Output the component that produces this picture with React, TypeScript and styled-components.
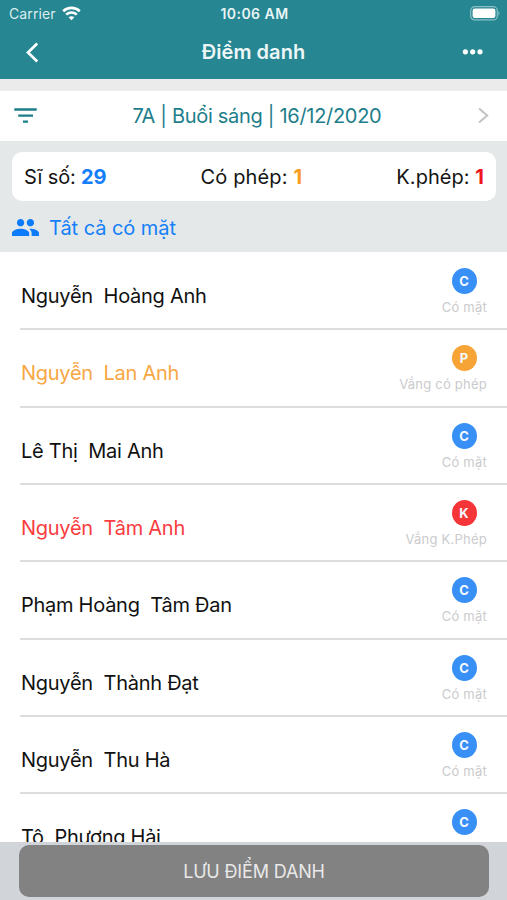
import React from 'react';
import styled, { createGlobalStyle } from 'styled-components';

const GlobalStyle = createGlobalStyle`
  * { box-sizing: border-box; }
  body { margin: 0; background: #fff; font-family: Inter, 'Liberation Sans', sans-serif; }
`;

const Screen = styled.div`
  width: 507px;
  height: 900px;
  overflow: hidden;
  display: flex;
  flex-direction: column;
  background: #fff;
  color: #141414;
`;

const Header = styled.header`
  height: 79px;
  flex: none;
  background: #268692;
  color: #fff;
`;

const StatusBar = styled.div`
  height: 27px;
  display: grid;
  grid-template-columns: 1fr auto 1fr;
  align-items: center;
  padding: 0 7px 0 9px;
`;

const Carrier = styled.div`
  display: flex;
  align-items: center;
  gap: 6px;
  font-size: 14px;
  line-height: 18px;
  letter-spacing: 0.1px;
  color: #dcedef;
`;

const Clock = styled.div`
  font-size: 14px;
  font-weight: 600;
  line-height: 18px;
  letter-spacing: 0.45px;
  color: #e9f4f5;
`;

const Battery = styled.svg`
  justify-self: end;
  display: block;
`;

const NavBar = styled.div`
  height: 50px;
  display: grid;
  grid-template-columns: 60px 1fr 60px;
  align-items: center;
  padding: 0 22px;
`;

const Title = styled.h1`
  margin: 0;
  text-align: center;
  font-size: 20px;
  line-height: 24px;
  font-weight: 600;
  letter-spacing: 0.05px;
  color: #eef7f8;
`;

const MoreIcon = styled.svg`
  display: block;
  justify-self: end;
`;

const FilterBar = styled.div`
  height: 62px;
  flex: none;
  border-top: 12px solid #ebebec;
  padding: 0 17px 0 14px;
  display: flex;
  align-items: center;
  justify-content: space-between;
  color: #1d7e8a;
`;

const FilterLabel = styled.div`
  font-size: 20px;
  line-height: 24px;
  letter-spacing: -0.3px;
  white-space: nowrap;
`;

const Summary = styled.section`
  height: 111px;
  flex: none;
  background: #e4e8e8;
  padding: 11px 11px 0 12px;
`;

const Counts = styled.div`
  height: 49px;
  border-radius: 10px;
  background: #fff;
  padding: 1px 12px 0;
  display: flex;
  align-items: center;
  justify-content: space-between;
  font-size: 20px;
  line-height: 24px;
  letter-spacing: -0.15px;
`;

const CountLabel = styled.span<{ $spacing?: number }>`
  letter-spacing: ${(p) => p.$spacing ?? -0.15}px;
`;

const Count = styled.b<{ $color: string }>`
  color: ${(p) => p.$color};
  font-weight: 700;
`;

const AllPresent = styled.div`
  height: 53px;
  display: flex;
  align-items: center;
  gap: 10px;
  color: #1580f8;
  font-size: 20px;
  line-height: 24px;
  letter-spacing: -0.05px;
`;

const List = styled.main`
  flex: 1;
  min-height: 0;
  overflow: hidden;
  padding-top: 1px;
`;

const Row = styled.div`
  height: 77.35px;
  margin-left: 20px;
  padding-right: 20px;
  border-bottom: 2px solid #dcdddd;
  display: flex;
  justify-content: space-between;
`;

const Name = styled.div<{ $color: string }>`
  padding: 31px 0 0 1px;
  font-size: 20px;
  line-height: 24px;
  letter-spacing: -0.27px;
  white-space: pre;
  color: ${(p) => p.$color};
`;

const State = styled.div`
  padding-top: 15px;
  display: flex;
  flex-direction: column;
  align-items: flex-end;
`;

const Badge = styled.div<{ $color: string }>`
  width: 25px;
  height: 26px;
  border-radius: 50%;
  margin-right: 10.5px;
  background: ${(p) => p.$color};
  color: #f4f8ff;
  font-size: 13px;
  font-weight: 700;
  line-height: 26px;
  text-align: center;
`;

const StateText = styled.div`
  margin-top: 4px;
  font-size: 13px;
  line-height: 18px;
  letter-spacing: 0.24px;
  color: #cbcbcd;
  white-space: nowrap;
`;

const Footer = styled.footer`
  height: 58px;
  flex: none;
  background: #d1d5da;
  padding: 3px 18px 0 19px;
`;

const SaveButton = styled.button`
  display: block;
  width: 100%;
  height: 52px;
  border: 0;
  border-radius: 10px;
  background: #828282;
  color: #e9e9e9;
  font-family: inherit;
  font-size: 18px;
  letter-spacing: -0.15px;
  padding: 0;
`;

const BLACK = '#111';
const STATES = {
  present: { letter: 'C', text: 'Có mặt', badge: '#388ff5', name: BLACK },
  excused: { letter: 'P', text: 'Vắng có phép', badge: '#f5a435', name: '#f7a743' },
  absent: { letter: 'K', text: 'Vắng K.Phép', badge: '#f53538', name: '#f93c40' },
};

const STUDENTS: { name: string; state: keyof typeof STATES }[] = [
  { name: 'Nguyễn  Hoàng Anh', state: 'present' },
  { name: 'Nguyễn  Lan Anh', state: 'excused' },
  { name: 'Lê Thị  Mai Anh', state: 'present' },
  { name: 'Nguyễn  Tâm Anh', state: 'absent' },
  { name: 'Phạm Hoàng  Tâm Đan', state: 'present' },
  { name: 'Nguyễn  Thành Đạt', state: 'present' },
  { name: 'Nguyễn  Thu Hà', state: 'present' },
  { name: 'Tô  Phương Hải', state: 'present' },
];

export default function App() {
  return (
    <Screen>
      <GlobalStyle />
      <Header>
        <StatusBar>
          <Carrier>
            Carrier
            <svg width="19" height="15" viewBox="0 0 19 15" fill="none" stroke="#fff" strokeWidth="2.6">
              <path d="M1.2 5.2C5.8.8 13.2.8 17.8 5.2" />
              <path d="M4.2 8.6c3-2.8 7.6-2.8 10.6 0" />
              <path d="M9.5 14.3 6.6 11.3c1.6-1.5 4.2-1.5 5.8 0z" fill="#fff" stroke="none" />
            </svg>
          </Carrier>
          <Clock>10:06 AM</Clock>
          <Battery width="30" height="15" viewBox="0 0 30 15">
            <rect x=".7" y=".7" width="26.6" height="13.2" rx="4" fill="none" stroke="#8bbfc6" strokeWidth="1.2" />
            <rect x="2.6" y="2.6" width="22.8" height="9.4" rx="2.2" fill="#fff" />
            <path d="M28.4 5v4.6c1.5-.7 1.5-3.9 0-4.6z" fill="#8bbfc6" />
          </Battery>
        </StatusBar>
        <NavBar>
          <svg width="20" height="24" viewBox="0 0 20 24" fill="none" stroke="#fff" strokeWidth="2.7">
            <path d="M15.2 3.500 6 12.500l9.200 9" />
          </svg>
          <Title>Điểm danh</Title>
          <MoreIcon width="24" height="10" viewBox="0 0 24 10" fill="#fff">
            <circle cx="4.4" cy="4.800" r="2.6" />
            <circle cx="11.7" cy="4.800" r="2.6" />
            <circle cx="19" cy="4.800" r="2.6" />
          </MoreIcon>
        </NavBar>
      </Header>

      <FilterBar>
        <svg width="24" height="20" viewBox="0 0 24 20" fill="none" stroke="#1d7e8a" strokeWidth="2.3">
          <path d="M.300 3.500h22.400M4.200 9.600h14.800M9 15.700h5" />
        </svg>
        <FilterLabel>7A | Buổi sáng | 16/12/2020</FilterLabel>
        <svg width="14" height="18" viewBox="0 0 14 18" fill="none" stroke="#c2c2c4" strokeWidth="2">
          <path d="m3 1.500 8.200 7-8.200 7" />
        </svg>
      </FilterBar>

      <Summary>
        <Counts>
          <CountLabel>Sĩ số: <Count $color="#157efb">29</Count></CountLabel>
          <CountLabel $spacing={0.15}>Có phép: <Count $color="#fb9c1c">1</Count></CountLabel>
          <CountLabel $spacing={0.05}>K.phép: <Count $color="#f0151a">1</Count></CountLabel>
        </Counts>
        <AllPresent>
          <svg width="27" height="17.2" viewBox="1 5 22 14" fill="#0d7bfa">
            <path d="M16 11c1.660 0 2.990-1.340 2.990-3S17.660 5 16 5s-3 1.340-3 3 1.340 3 3 3zm-8 0c1.660 0 2.990-1.340 2.990-3S9.660 5 8 5 5 6.340 5 8s1.340 3 3 3zm0 2c-2.330 0-7 1.170-7 3.500V19h14v-2.500C15 14.170 10.330 13 8 13zm8 0c-.29 0-.62.020-.970.050 1.160.840 1.970 1.970 1.970 3.450V19h6v-2.500c0-2.330-4.670-3.500-7-3.500z" />
          </svg>
          Tất cả có mặt
        </AllPresent>
      </Summary>

      <List>
        {STUDENTS.map(({ name, state }) => {
          const s = STATES[state];
          return (
            <Row key={name}>
              <Name $color={s.name}>{name}</Name>
              <State>
                <Badge $color={s.badge}>{s.letter}</Badge>
                <StateText>{s.text}</StateText>
              </State>
            </Row>
          );
        })}
      </List>

      <Footer>
        <SaveButton>LƯU ĐIỂM DANH</SaveButton>
      </Footer>
    </Screen>
  );
}
